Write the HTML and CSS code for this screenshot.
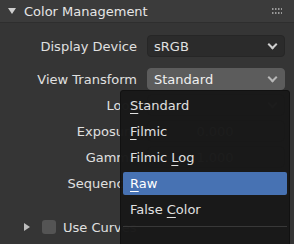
FILE: index.html
```html
<!DOCTYPE html>
<html lang="en">

<head>
    <meta charset="UTF-8">
    <title>Color Management</title>
    <link rel="stylesheet" href="styles.css">
</head>

<body>

    <div class="panel">
        <div class="panel-header">
            <span class="arrow-down"></span>
            <span class="panel-title">Color Management</span>
            <svg class="grip" width="10" height="7" viewBox="0 0 10 7">
                <rect x="0" y="0" width="1.5" height="2" fill="#9a9a9a" />
                <rect x="3" y="0" width="1.5" height="2" fill="#9a9a9a" />
                <rect x="6" y="0" width="1.5" height="2" fill="#9a9a9a" />
                <rect x="9" y="0" width="1.5" height="2" fill="#9a9a9a" />
                <rect x="0" y="4" width="1.5" height="2" fill="#9a9a9a" />
                <rect x="3" y="4" width="1.5" height="2" fill="#9a9a9a" />
                <rect x="6" y="4" width="1.5" height="2" fill="#9a9a9a" />
                <rect x="9" y="4" width="1.5" height="2" fill="#9a9a9a" />
            </svg>
        </div>

        <div class="panel-body">
            <div class="row">
                <label>Display Device</label>
                <div class="dropdown">sRGB <span class="chevron"></span></div>
            </div>
            <div class="row row-gap">
                <label>View Transform</label>
                <div class="dropdown open">Standard <span class="chevron"></span></div>
            </div>
            <div class="row">
                <label>Look</label>
                <div class="dropdown">None <span class="chevron"></span></div>
            </div>
            <div class="row">
                <label>Exposure</label>
                <div class="number">0.000</div>
            </div>
            <div class="row">
                <label>Gamma</label>
                <div class="number">1.000</div>
            </div>
            <div class="row">
                <label>Sequencer</label>
                <div class="dropdown">sRGB <span class="chevron"></span></div>
            </div>

            <div class="subpanel">
                <span class="arrow-right"></span>
                <span class="checkbox"></span>
                <span class="sub-title">Use Curves</span>
            </div>
        </div>

        <!-- menu do View Transform -->
        <div class="menu">
            <div class="menu-item"><u>S</u>tandard</div>
            <div class="menu-item"><u>F</u>ilmic</div>
            <div class="menu-item">Filmic <u>L</u>og</div>
            <div class="menu-item active"><u>R</u>aw</div>
            <div class="menu-item">False <u>C</u>olor</div>
            <div class="menu-footer"></div>
        </div>
    </div>

</body>

</html>
```

FILE: styles.css
```css
body {
    margin: 0;
    background-color: #353535;
    font-family: "DejaVu Sans", sans-serif;
    font-size: 13px;
    color: #e0e0e0;
}

.panel {
    position: relative;
    width: 294px;
    height: 244px;
    overflow: hidden;
}

.panel-header {
    display: flex;
    align-items: center;
    height: 22px;
    padding: 0 12px 0 8px;
    background-color: #3b3b3b;
    border-bottom: 1px solid #2e2e2e;
}

.arrow-down {
    width: 0;
    height: 0;
    border-left: 4px solid transparent;
    border-right: 4px solid transparent;
    border-top: 6px solid #cfcfcf;
    margin-right: 8px;
}

.panel-title {
    flex: 1;
    color: #e6e6e6;
}

.grip {
    margin-top: 1px;
}

.panel-body {
    padding-top: 10px;
}

.row {
    display: grid;
    grid-template-columns: 137px 138px;
    column-gap: 10px;
    align-items: center;
    height: 26px;
}

.row-gap {
    margin-top: 7px;
}

.row label {
    text-align: right;
    color: #e0e0e0;
}

.dropdown,
.number {
    display: flex;
    align-items: center;
    height: 22px;
    padding: 0 8px 0 6px;
    background-color: #2b2b2b;
    border: 1px solid #262626;
    border-radius: 4px;
    box-sizing: border-box;
}

.number {
    justify-content: center;
}

.dropdown.open {
    background-color: #5c5c5c;
    border-color: #5c5c5c;
    color: #f0f0f0;
}

.dropdown.open .chevron {
    border-color: #b8b8b8;
}

.chevron {
    margin-left: auto;
    width: 5px;
    height: 5px;
    border-right: 2px solid #cfcfcf;
    border-bottom: 2px solid #cfcfcf;
    transform: translateY(-2px) rotate(45deg);
}

.subpanel {
    display: flex;
    align-items: center;
    margin-top: 20px;
    height: 22px;
    padding-left: 24px;
}

.arrow-right {
    width: 0;
    height: 0;
    border-top: 4px solid transparent;
    border-bottom: 4px solid transparent;
    border-left: 6px solid #bdbdbd;
    margin-right: 12px;
}

.checkbox {
    width: 14px;
    height: 14px;
    background-color: #545454;
    border-radius: 3px;
    margin-right: 7px;
}

.sub-title {
    color: #e0e0e0;
}

/* menu aberto sobre os campos */
.menu {
    position: absolute;
    left: 120px;
    top: 90px;
    width: 170px;
    height: 170px;
    background-color: rgba(24, 24, 24, 0.98);
    border: 1px solid #111;
    border-radius: 3px;
    padding: 2px 2px 0;
    box-sizing: border-box;
}

.menu-item {
    height: 26px;
    line-height: 26px;
    padding-left: 7px;
    color: #e0e0e0;
    border-radius: 2px;
}

.menu-item u {
    text-underline-offset: 3px;
}

.menu-item.active {
    background-color: #4772b3;
    color: #fff;
    height: 23px;
    line-height: 23px;
    margin: 1px 0 2px;
}

.menu-footer {
    margin-top: 3px;
    border-top: 1px solid #383838;
}
```
